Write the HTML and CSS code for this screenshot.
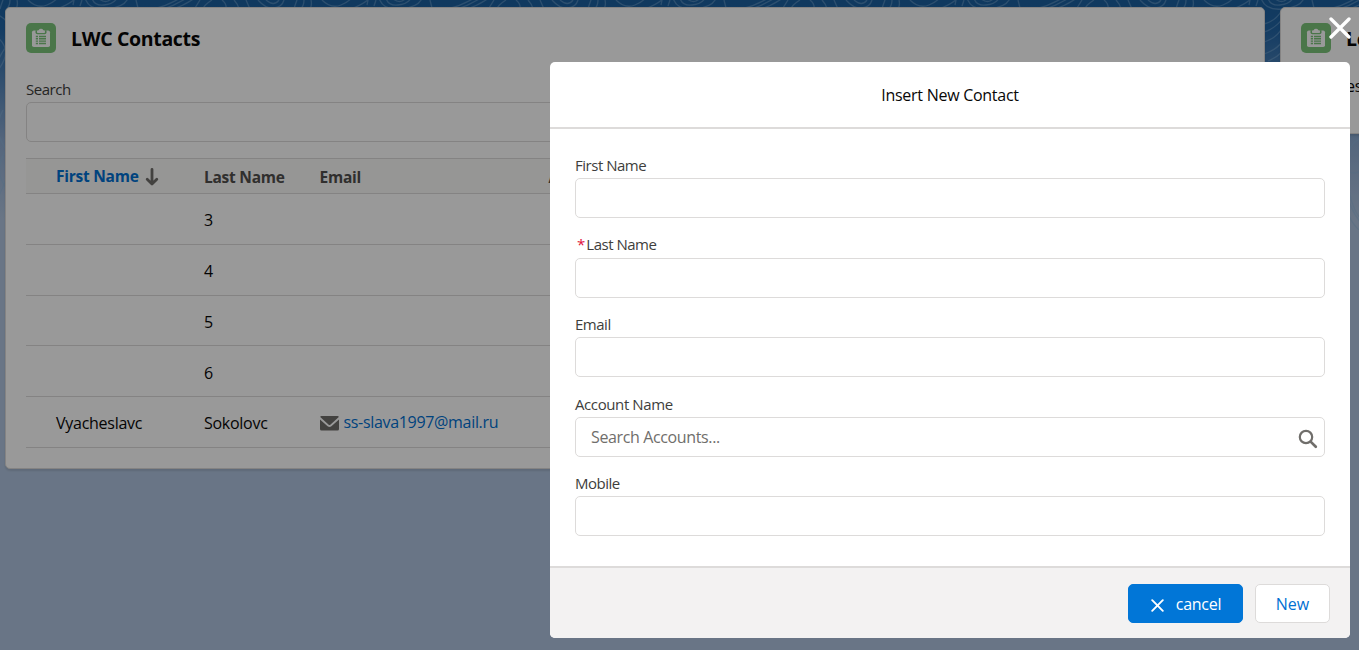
FILE: index.html
```html
<!DOCTYPE html>
<html lang="en">
<head>
<meta charset="utf-8">
<title>LWC Contacts</title>
<link rel="stylesheet" href="styles.css">
</head>
<body>
<svg class="symbols" width="0" height="0">
  <symbol id="clipboard" viewBox="0 0 30 30">
    <rect x="6" y="7.500" width="18" height="16.500" rx="1.800" fill="#fff"/>
    <path d="M9.500 7.200v2.200q0 1.800 1.800 1.800h7.400q1.800 0 1.800-1.800V7.200" fill="#7cc57b"/>
    <path d="M11 8.400q0-1.200 1.200-1.200h.6q.3-1.400 2.200-1.400t2.200 1.400h.6q1.200 0 1.200 1.200v.5q0 1.200-1.200 1.200h-5.600Q11 10.100 11 8.900z" fill="#fff"/>
    <path d="M9.800 13.500h2.200M13 13.500h7M9.800 15.800h2.200M13 15.800h7M9.800 18.100h2.200M13 18.100h7M9.800 20.500h2.200M13 20.500h7" stroke="#7cc57b" stroke-width="1.400" fill="none"/>
  </symbol>
</svg>

<div class="page">
  <svg class="contours" width="1359" height="230" fill="none">
    <defs>
      <pattern id="topo" width="294" height="230" patternUnits="userSpaceOnUse">
        <path d="M3 0q-2 5-3 9M10 0q0 6-4 10M17 0q2 8-5 14M28 0q9 9 19 5T60-6M57 9Q70 4 76-2M73 5l1-5M80 6l2-6M92-2q2 8 12 7t13-7M98-2q8 7 14 0M85-2q4 13 22 11T128-2M136 0l2 8M154 9Q170 5 185-5M163 9Q177 5 191-5M173 9Q188 4 197-4M200 0l-5 8M212 0q-8 5-9 9M222 0q5 4 4 9M234 0q4 4 5 9M246 0l4 9M258 0q8 9 16 8t10-8M266 0q8 7 13 0"/>
        <path d="M-4 14Q20 25 5 48T-4 84M-4 36Q14 50-2 70M3 110Q-8 130 6 149M10 145Q-10 170 8 190M6 180l-8 18"/>
      </pattern>
    </defs>
    <rect width="1359" height="230" fill="url(#topo)" stroke="none"/>
    <path d="M1264 24q12-3 18-14M1264 32q12-4 18-13M1264 42q13-4 18-14M1264 54q12-4 18-12M1268 61q8-3 14-9"/>
    <path d="M1362 138q-10 3-13 14M1362 171q-7 3-14 1M1347 178q4 32 15 42M1347 195q5 18 15 29M1347 210q4 13 12 20"/>
  </svg>

  <main class="columns">
    <section class="card contacts">
      <header class="card-head">
        <svg class="card-icon"><use href="#clipboard"/></svg>
        <h2 class="card-title">LWC Contacts</h2>
      </header>
      <div class="label search-label">Search</div>
      <div class="input"></div>
      <div class="table">
        <div class="row head">
          <div class="cell sorted"><span>First Name</span>
            <svg class="arrow" width="14" height="18" viewBox="0 0 14 18"><path d="M7 1.500v14M2.200 11.300L7 16l4.800-4.700" fill="none" stroke="#706e6b" stroke-width="2.800" stroke-linecap="round" stroke-linejoin="round"/></svg>
          </div>
          <div class="cell">Last Name</div><div class="cell">Email</div><div class="cell">A</div>
        </div>
        <div class="row"><div class="cell"></div><div class="cell">3</div></div>
        <div class="row"><div class="cell"></div><div class="cell">4</div></div>
        <div class="row"><div class="cell"></div><div class="cell">5</div></div>
        <div class="row"><div class="cell"></div><div class="cell">6</div></div>
        <div class="row"><div class="cell">Vyacheslavc</div><div class="cell">Sokolovc</div>
          <div class="cell email">
            <svg class="mail" width="19" height="15" viewBox="0 0 19 15"><path d="M1.500 0h16q1.200 0 1.300 1L10.300 8.700q-.8.700-1.600 0L.2 1Q.4 0 1.500 0zM0 3.400l7.600 6.900q1.900 1.600 3.800 0L19 3.400V13q0 1.500-1.500 1.500h-16Q0 14.500 0 13z" fill="#706e6b"/></svg>
            <span>ss-slava1997@mail.ru</span>
          </div>
        </div>
      </div>
    </section>

    <section class="card lead">
      <header class="card-head">
        <svg class="card-icon"><use href="#clipboard"/></svg>
        <h2 class="card-title">Le</h2>
      </header>
      <div class="lead-text">es</div>
    </section>
  </main>
</div>

<div class="backdrop"></div>

<div class="modal">
  <svg class="close" width="22" height="22" viewBox="0 0 22 22"><path d="M2 2l18 18M20 2L2 20" stroke="#fff" stroke-width="3.300" stroke-linecap="round"/></svg>
  <header class="modal-head">Insert New Contact</header>
  <div class="modal-body">
    <div class="field"><div class="label">First Name</div><div class="input"></div></div>
    <div class="field"><div class="label required"><span class="star">*</span><span>Last Name</span></div><div class="input"></div></div>
    <div class="field"><div class="label">Email</div><div class="input"></div></div>
    <div class="field"><div class="label raised">Account Name</div>
      <div class="input lookup"><span>Search Accounts...</span>
        <svg width="20" height="20" viewBox="0 0 20 20" fill="none" stroke="#706e6b"><circle cx="8" cy="8" r="6.200" stroke-width="2.200"/><path d="M12.600 12.600l5.200 5.200" stroke-width="2.700" stroke-linecap="round"/></svg>
      </div>
    </div>
    <div class="field"><div class="label">Mobile</div><div class="input"></div></div>
  </div>
  <footer class="modal-foot">
    <div class="button brand"><svg width="13" height="13" viewBox="0 0 13 13"><path d="M1.200 1.200l10.600 10.600M11.800 1.200L1.200 11.800" stroke="#fff" stroke-width="1.900" stroke-linecap="round"/></svg><span>cancel</span></div>
    <div class="button">New</div>
  </footer>
</div>
</body>
</html>
```

FILE: styles.css
```css
* { box-sizing: border-box; }
body {
  margin: 0;
  width: 1359px;
  height: 650px;
  overflow: hidden;
  font: 16px/24px "Open Sans", "Noto Sans", sans-serif;
  letter-spacing: -.27px;
  color: #080707;
}
.symbols { position: absolute; }
.page {
  height: 650px;
  overflow: hidden;
  background: linear-gradient(#1b5f9e 0, #2265a5 30px, #8ba9d0 140px, #b0c4df 220px);
}
.contours {
  position: absolute;
  left: 0;
  top: 0;
  stroke: #8bb4dc;
  stroke-opacity: .42;
  stroke-width: 1.300;
}
.columns {
  position: relative;
  display: flex;
  align-items: flex-start;
  gap: 15px;
  width: 1800px;
  padding: 7px 0 0 5px;
}
.card {
  background: #fff;
  border: 1px solid #dddbda;
  border-radius: 5px;
  box-shadow: 0 2px 2px rgba(0, 0, 0, .1);
}
.contacts { width: 1260px; height: 462px; padding: 15px 20px 0; }
.lead { width: 480px; height: 127px; padding: 15px 20px 0; }
.card-head { display: flex; align-items: center; gap: 15px; height: 30px; }
.card-icon { width: 30px; height: 30px; border-radius: 5px; background: #7cc57b; }
.card-title { margin: 0; padding-top: 2px; font-size: 19.500px; font-weight: 700; line-height: 30px; letter-spacing: -.34px; }
.lead-text { padding: 21px 0 0 45px; }
.label { height: 25px; font-size: 15px; line-height: 25px; color: #3e3e3c; letter-spacing: -.48px; }
.label.raised { line-height: 24px; letter-spacing: -.4px; }
.search-label { margin-top: 24px; }
.input { height: 40px; border: 1px solid #dddbda; border-radius: 5px; background: #fff; }
.table { margin-top: 16px; }
.row {
  display: grid;
  grid-template-columns: 148px 115.500px 229px 1fr;
  height: 50.750px;
  padding-left: 30px;
  align-items: center;
  border-bottom: 1px solid #dddbda;
}
.row.head {
  height: 36px;
  background: #fafaf9;
  border-top: 1px solid #dddbda;
  color: #514f4d;
  font-size: 15.500px;
  font-weight: 700;
  letter-spacing: -.25px;
}
.cell { padding-top: 3px; }
.head .cell { padding-top: 2px; }
.head .sorted { padding-top: 0; }
.sorted { display: flex; align-items: center; gap: 6px; color: #0070d2; }
.arrow { margin-top: 2px; }
.email { display: flex; align-items: center; gap: 5px; color: #0070d2; padding-top: 1px; letter-spacing: -.32px; }
.mail { margin-top: 2px; }
.backdrop { position: absolute; inset: 0; background: rgba(0, 0, 0, .4); }
.modal {
  position: absolute;
  left: 550px;
  top: 62px;
  width: 800px;
  height: 576px;
  display: flex;
  flex-direction: column;
  border-radius: 5px;
  background: #fff;
}
.close { position: absolute; right: -1px; top: -45px; }
.modal-head {
  height: 67px;
  border-bottom: 2px solid #dddbda;
  text-align: center;
  line-height: 67px;
}
.modal-body { flex: 1; padding: 24px 25px 0; }
.field { height: 79.500px; }
.required { display: flex; gap: 1.500px; padding-left: 2px; line-height: 23px; }
.star { color: #e0103a; }
.lookup { display: flex; align-items: center; justify-content: space-between; padding: 0 6px 0 15px; color: #706e6b; letter-spacing: -.37px; }
.lookup svg { margin-top: 4px; }
.modal-foot {
  display: flex;
  align-items: flex-start;
  justify-content: flex-end;
  gap: 12px;
  height: 72px;
  padding: 16px 20px 0;
  border-top: 2px solid #dddbda;
  border-radius: 0 0 5px 5px;
  background: #f3f2f2;
}
.button {
  display: flex;
  align-items: center;
  justify-content: center;
  width: 75px;
  height: 39px;
  padding-top: 1px;
  border: 1px solid #dddbda;
  border-radius: 5px;
  background: #fff;
  color: #0070d2;
  letter-spacing: 0;
}
.brand { width: 115px; gap: 12px; padding-left: 1px; border-color: #0176d7; background: #0176d7; color: #fff; letter-spacing: -.25px; }
.brand svg { margin-top: 2px; }
```
